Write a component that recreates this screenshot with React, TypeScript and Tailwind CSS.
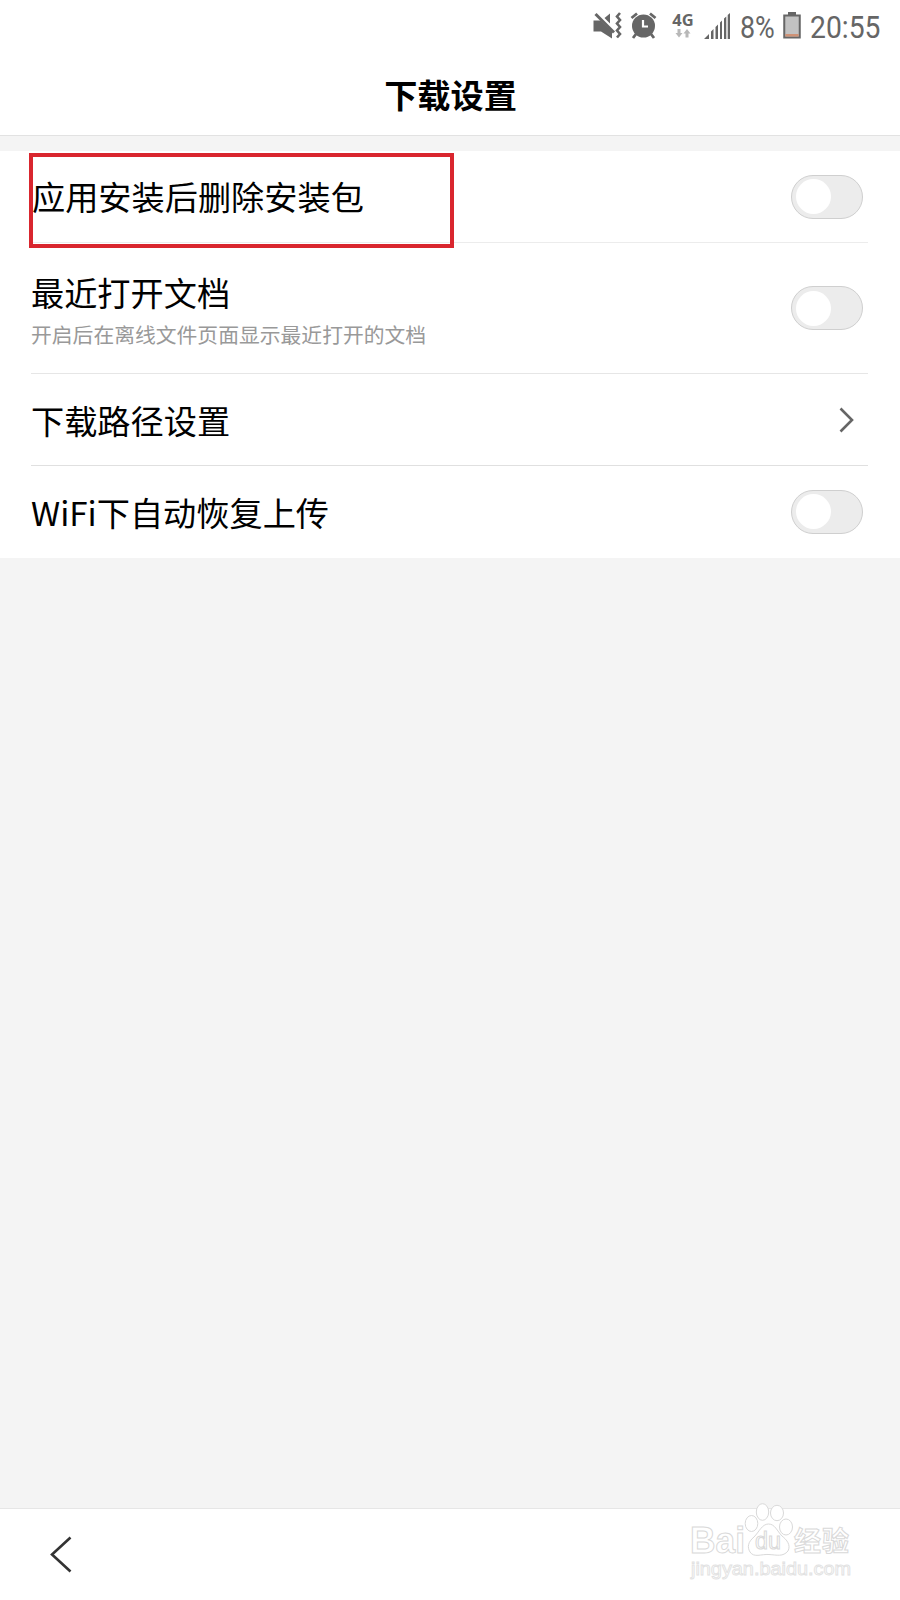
import React from "react";

function Toggle() {
  return (
    <span
      role="switch"
      aria-checked="false"
      className="flex h-[44px] w-[72px] shrink-0 items-center rounded-full border border-[#cfcfcf] bg-[#ececec] pl-[4px]"
    >
      <span className="size-[35px] rounded-full bg-white" />
    </span>
  );
}

function StatusBar() {
  return (
    <div className="flex h-[54px] items-start text-[#666]">
      <svg className="ml-[592px] mt-[11px] h-[30px] w-[32px] shrink-0" viewBox="0 0 32 30" fill="none">
        <path d="M1.500 9.500h7L20 20.500V27.500L9 20.500H1.500z" fill="currentColor" />
        <path d="M12.500 7L18 2.500V12.500z" fill="currentColor" />
        <path d="M3.500 3L22 21.500" stroke="currentColor" strokeWidth="3" />
        <path d="M28 2L25 5.500L28 9L25 12.500L28 16L25 19.500L28 23L25 26.500" stroke="currentColor" strokeWidth="2.600" />
      </svg>
      <svg className="ml-[6px] mt-[11px] h-[30px] w-[28px] shrink-0" viewBox="0 0 28 30" fill="none">
        <circle cx="13.500" cy="15" r="11.500" fill="currentColor" />
        <path d="M1.500 7L7 2.500M20 2.500L25.500 7" stroke="currentColor" strokeWidth="2.800" />
        <path d="M6 23L3 27M21 23L24 27" stroke="currentColor" strokeWidth="2.800" />
        <path d="M13 9V15.500H18" stroke="white" strokeWidth="2.200" />
      </svg>
      <div className="ml-[13px] mt-[11px] flex w-[24px] shrink-0 flex-col items-center">
        <span className="font-['Open_Sans',sans-serif] text-[16.500px] font-bold leading-[17px]">4G</span>
        <svg className="mt-[1px] h-[9px] w-[16px]" viewBox="0 0 16 9" fill="#b8b8b8">
          <path d="M2.500 0h3v4h2L4 8.500L.5 4h2zM10.500 8.500h3v-4h2L12 0L8.500 4.500h2z" />
        </svg>
      </div>
      <svg className="ml-[9px] mt-[13px] h-[26px] w-[27px] shrink-0" viewBox="0 0 27 26" fill="currentColor">
        <path d="M0 26L5 21V26zM7 18.500L9.500 16V26H7zM11.500 14L14 11.500V26H11.500zM16 9.500L18 7.500V26H16zM20 5.500L22.300 3.500V26H20zM23.700 2L26 0V26H23.700z" />
      </svg>
      <span className="ml-[9px] mt-[8px] w-[35px] shrink-0 origin-left scale-x-[0.840] whitespace-nowrap font-[Roboto,sans-serif] text-[32px] leading-[38px]">8%</span>
      <svg className="ml-[8px] mt-[12px] h-[27px] w-[18px] shrink-0" viewBox="0 0 18 27">
        <path d="M5 0h8v3H5z" fill="#666" />
        <path d="M1.250 3.500h15.500v22H1.250z" fill="#c2c2c2" stroke="#666" strokeWidth="2" />
        <path d="M2.300 22h13.400v2.500H2.300z" fill="#cf9276" />
      </svg>
      <span className="ml-[9px] mt-[8px] w-[72px] shrink-0 origin-left scale-x-[0.885] whitespace-nowrap font-[Roboto,sans-serif] text-[32px] leading-[38px]">20:55</span>
    </div>
  );
}

function Watermark() {
  return (
    <svg className="absolute left-[686px] top-[1498px] h-[90px] w-[170px]" viewBox="0 0 170 90" fill="#fff" stroke="#d9d9d9" strokeWidth="1">
      <text x="4" y="55" fontFamily="Liberation Sans, sans-serif" fontWeight="bold" fontSize="36" textLength="55" lengthAdjust="spacingAndGlyphs">Bai</text>
      <ellipse cx="65.500" cy="25.500" rx="6.300" ry="8" />
      <ellipse cx="76.500" cy="14" rx="6.200" ry="8.300" />
      <ellipse cx="91" cy="15" rx="6.500" ry="7.700" />
      <ellipse cx="100" cy="29" rx="6.500" ry="8" />
      <path d="M82.500 26C76 26 73 34 68 39C62 44 61 49 64 54C68 60 75 56 83 56.500C91 57 97 59 102 53C105 47 101 42 96 38C91 33 89 26 82.500 26Z" />
      <text x="69" y="51" fontFamily="Liberation Sans, sans-serif" fontSize="23" textLength="26" lengthAdjust="spacingAndGlyphs">du</text>
      <text x="108" y="53" fontFamily="Noto Sans CJK SC, sans-serif" fontWeight="bold" fontSize="27" textLength="55">经验</text>
      <text x="5" y="77" fontFamily="Liberation Sans, sans-serif" fontSize="18.500" textLength="160" lengthAdjust="spacingAndGlyphs" strokeWidth="0.900" stroke="#e2e2e2">jingyan.baidu.com</text>
    </svg>
  );
}

export default function App() {
  return (
    <div className="relative flex h-[1600px] w-[900px] flex-col overflow-hidden bg-[#f4f4f4] font-['Noto_Sans_CJK_SC',sans-serif] text-black">
      <header className="h-[136px] shrink-0 border-b border-[#e2e2e2] bg-white">
        <StatusBar />
        <h1 className="pl-[1px] text-center text-[33.200px] font-bold leading-[80px]">下载设置</h1>
      </header>

      <main className="mt-[15px] h-[407px] shrink-0 bg-white pl-[31px] pr-[32px] text-[33.200px]">
        <div className="flex h-[92px] items-center justify-between border-b border-[#ececec] pr-[5px]">
          <span className="-mt-[2px] pl-[1px] leading-[50px]">应用安装后删除安装包</span>
          <Toggle />
        </div>
        <div className="flex h-[131px] items-center justify-between border-b border-[#e6e6e6] pr-[5px]">
          <div className="flex flex-col">
            <span className="leading-[50px]">最近打开文档</span>
            <span className="pt-[1px] text-[20.800px] leading-[32px] text-[#999]">开启后在离线文件页面显示最近打开的文档</span>
          </div>
          <Toggle />
        </div>
        <div className="flex h-[92px] items-center justify-between border-b border-[#e0e0e0] pr-[14px]">
          <span className="leading-[50px]">下载路径设置</span>
          <svg className="h-[26px] w-[16px]" viewBox="0 0 16 26" fill="none" stroke="#666" strokeWidth="2.600">
            <path d="M2.500 1.500L14 13L2.500 24.500" />
          </svg>
        </div>
        <div className="flex h-[91px] items-center justify-between pr-[5px]">
          <span className="leading-[50px]">WiFi下自动恢复上传</span>
          <Toggle />
        </div>
      </main>

      <footer className="mt-auto flex h-[92px] shrink-0 items-center border-t border-[#e6e6e6] bg-white">
        <svg className="ml-[50px] h-[37px] w-[22px]" viewBox="0 0 22 37" fill="none" stroke="#333" strokeWidth="2.600">
          <path d="M20.500 1.500L2 18.500L20.500 35.500" />
        </svg>
      </footer>

      <div className="absolute left-[29px] top-[152.500px] h-[95px] w-[425px] border-4 border-[#d9262e]" />
      <Watermark />
    </div>
  );
}
